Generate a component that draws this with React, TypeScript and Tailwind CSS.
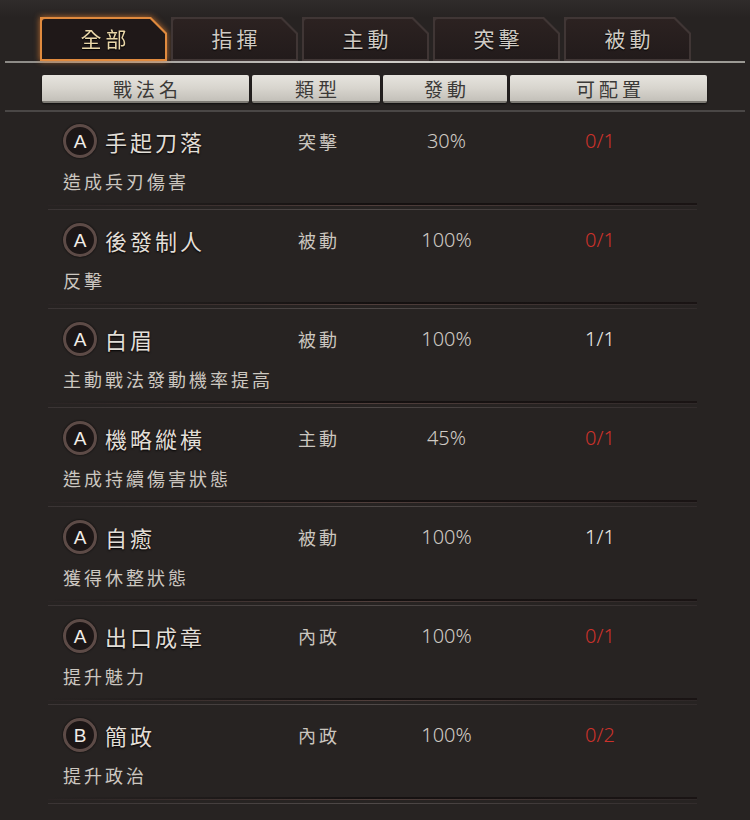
import React from "react";

type Skill = {
  grade: "A" | "B";
  name: string;
  type: string;
  rate: string;
  slots: string;
  full: boolean;
  desc: string;
};

const tabs = ["全部", "指揮", "主動", "突擊", "被動"];

const skills: Skill[] = [
  { grade: "A", name: "手起刀落", type: "突擊", rate: "30%", slots: "0/1", full: false, desc: "造成兵刃傷害" },
  { grade: "A", name: "後發制人", type: "被動", rate: "100%", slots: "0/1", full: false, desc: "反擊" },
  { grade: "A", name: "白眉", type: "被動", rate: "100%", slots: "1/1", full: true, desc: "主動戰法發動機率提高" },
  { grade: "A", name: "機略縱橫", type: "主動", rate: "45%", slots: "0/1", full: false, desc: "造成持續傷害狀態" },
  { grade: "A", name: "自癒", type: "被動", rate: "100%", slots: "1/1", full: true, desc: "獲得休整狀態" },
  { grade: "A", name: "出口成章", type: "內政", rate: "100%", slots: "0/1", full: false, desc: "提升魅力" },
  { grade: "B", name: "簡政", type: "內政", rate: "100%", slots: "0/2", full: false, desc: "提升政治" },
];

const font = "font-['Noto_Sans_CJK_TC','Noto_Sans',sans-serif]";

const Tab = ({ label, active }: { label: string; active: boolean }) => (
  <div
    className={
      active
        ? "w-[127px] h-[44px] [filter:drop-shadow(0_0_3px_rgba(230,130,50,0.8))]"
        : "w-[127px] h-[44px]"
    }
  >
    <div
      className={`h-full p-[2px] [clip-path:polygon(0_0,calc(100%-16px)_0,100%_16px,100%_100%,0_100%)] ${
        active ? "bg-[#e08a3e]" : "bg-[#403635]"
      }`}
    >
      <div
        className={`h-full flex items-center justify-center rounded-tl-[3px] [clip-path:polygon(0_0,calc(100%-15px)_0,100%_15px,100%_100%,0_100%)] ${
          active ? "bg-[#1f1818]" : "bg-gradient-to-b from-[#2c2221] to-[#221b1b]"
        }`}
      >
        <span
          className={`text-[21px] tracking-[4px] pl-[4px] ${
            active ? "text-[#e9d6a8]" : "text-[#cfcac3]"
          } [text-shadow:0_1px_1px_#000]`}
        >
          {label}
        </span>
      </div>
    </div>
  </div>
);

const HeadCell = ({ label, w }: { label: string; w: string }) => (
  <div
    className={`${w} h-[28px] flex items-center justify-center rounded-[2px] bg-gradient-to-b from-[#e6e4de] via-[#d8d5ce] to-[#c3c0b9] border-b-2 border-[#7d7a74] shadow-[0_1px_2px_rgba(0,0,0,0.6)]`}
  >
    <span className="text-[19px] text-[#3b3937] tracking-[4px] pl-[4px] leading-none">{label}</span>
  </div>
);

const Row = ({ s }: { s: Skill }) => (
  <div className="pt-[13px]">
    <div className="flex items-center h-[34px]">
      <div className="w-[210px] flex items-center pl-[21px]">
        <div className="w-[34px] h-[34px] rounded-full border-[3px] border-[#5d4b47] bg-[#1c1616] flex items-center justify-center shadow-[0_0_2px_#000]">
          <span className="text-[19px] text-[#f0ece6] font-['Liberation_Sans',sans-serif] leading-none">
            {s.grade}
          </span>
        </div>
        <span className="ml-[8px] text-[22px] text-[#e2ded7] tracking-[3px] [text-shadow:0_1px_2px_#000]">
          {s.name}
        </span>
      </div>
      <div className="w-[131px] text-center text-[18px] text-[#cbc6bf] tracking-[3px] pl-[3px]">{s.type}</div>
      <div className="w-[127px] text-center text-[20px] text-[#cfcac4] font-['Noto_Sans',sans-serif] font-light">
        {s.rate}
      </div>
      <div
        className={`w-[180px] text-center text-[20px] font-['Noto_Sans',sans-serif] font-light ${
          s.full ? "text-[#ecebe8]" : "text-[#cc322b]"
        }`}
      >
        {s.slots}
      </div>
    </div>
    <div className="mt-[12px] h-[22px] pl-[21px] flex items-center text-[18px] text-[#ccc7c0] tracking-[3px]">
      {s.desc}
    </div>
    <div className="mt-[11px] ml-[6px] w-[649px]">
      <div className="h-[2px] bg-gradient-to-r from-transparent via-[#151111] to-[#1a1414]" />
      <div className="h-[1px] bg-gradient-to-r from-[#2a2424] via-[#503e3b] to-[#2e2828]" />
      <div className="h-[3px]" />
      <div className="h-[1px] bg-gradient-to-r from-[#3a3434] via-[#4f4948] to-[#322c2c]" />
    </div>
  </div>
);

export default function App() {
  return (
    <div className={`w-[750px] h-[820px] overflow-hidden bg-[#272322] ${font}`}>
      <div className="h-[17px] bg-gradient-to-b from-[#302c2b] to-[#272322]" />
      <div className="flex gap-[4px] pl-[40px]">
        {tabs.map((t, i) => (
          <Tab key={t} label={t} active={i === 0} />
        ))}
      </div>
      <div className="mx-[5px] h-[2px] bg-gradient-to-r from-[#8c8a86] via-[#d0cec9] to-[#9a9893]" />
      <div className="flex gap-[3px] pl-[42px] pt-[12px]">
        <HeadCell label="戰法名" w="w-[207px]" />
        <HeadCell label="類型" w="w-[128px]" />
        <HeadCell label="發動" w="w-[124px]" />
        <HeadCell label="可配置" w="w-[197px]" />
      </div>
      <div className="mt-[7px] mx-[5px] h-[2px] bg-[#4a4746]" />
      <div className="pl-[42px] -mt-[1px]">
        {skills.map((s) => (
          <Row key={s.name} s={s} />
        ))}
      </div>
    </div>
  );
}
